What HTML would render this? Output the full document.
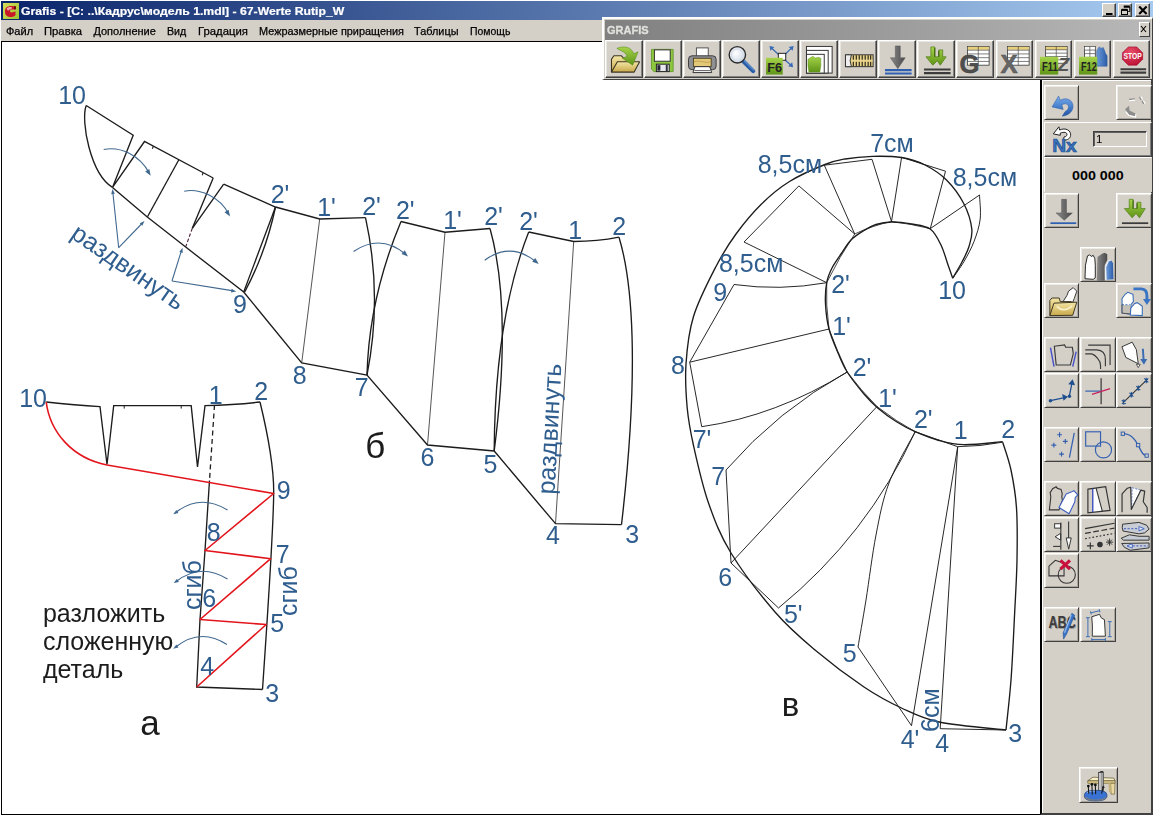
<!DOCTYPE html>
<html><head><meta charset="utf-8">
<style>
*{box-sizing:border-box;margin:0;padding:0}
html,body{width:1153px;height:816px;overflow:hidden;background:#d4d0c8;font-family:"Liberation Sans",sans-serif}
#root{position:absolute;left:0;top:0;width:1153px;height:816px;overflow:hidden;background:#fff}
#title{position:absolute;left:1px;top:1px;width:1152px;height:19px;background:linear-gradient(to right,#0a246a,#a6caf0)}
#title .t{position:absolute;left:19.6px;top:3.6px;font-size:11.5px;font-weight:bold;color:#fff;white-space:nowrap;transform-origin:0 0;line-height:13px;transform:scaleX(1.062);-webkit-text-stroke:0.2px #fff}
#menu{position:absolute;left:1px;top:20px;width:1152px;height:21px;background:#d4d0c8}
#menu span{position:absolute;top:4.6px;-webkit-text-stroke:0.25px #000;font-size:11px;line-height:13px;color:#000;white-space:nowrap;transform-origin:0 0}
.tb{position:absolute;top:2px;width:14.5px;height:13.6px;background:#d4d0c8;border:1px solid;border-color:#fff #404040 #404040 #fff;box-shadow:inset -1px -1px 0 #808080}
#canvas{position:absolute;left:1px;top:41px;width:1040px;height:774px;background:#fff;border:1px solid #000;border-right:none;}
#draw{position:absolute;left:0;top:0;width:1153px;height:816px;will-change:transform}
#tbwin{position:absolute;left:602px;top:17px;width:550.5px;height:63px;background:#d4d0c8;border:solid;border-width:2px 1.5px 1.5px 2px;border-color:#fff #404040 #404040 #fff}
#tbwin .cap{position:absolute;left:1px;top:1px;right:1px;height:19.5px;background:linear-gradient(to right,#808080,#a0a0a0 60%,#b8b8b8)}
#tbwin .cap b{position:absolute;left:2px;top:4px;font-size:10px;line-height:13px;color:#e0e0dc;transform-origin:0 0;transform:scaleX(1.1);-webkit-text-stroke:0.3px #e0e0dc;will-change:transform}
.xb{position:absolute;right:1px;top:2px;width:11px;height:15px;background:#d4d0c8;border:1px solid;border-color:#fff #404040 #404040 #fff}
.xb svg{position:absolute;left:-1px;top:-1px}
.btn{position:absolute;background:#d4d0c8;border:1px solid;border-color:#fff #404040 #404040 #fff;box-shadow:inset -1px -1px 0 #808080,inset 1px 1px 0 #e8e6e0}
.btn svg{position:absolute;left:0;top:0}
.sb{box-shadow:inset 1px 1px 0 #ecebe6,inset -1px -1px 0 #aaa69e;border-color:#fff #404040 #404040 #fff}
#side{position:absolute;left:1040px;top:79px;width:113px;height:735.5px;background:#d4d0c8;border-left:2px solid #000;border-top:1px solid #404040;border-right:2px solid #404040;border-bottom:2px solid #404040;box-shadow:inset 1px 1px 0 #fff}
.gl{position:absolute;left:0;top:0;width:100%;height:100%;will-change:transform}
.rp{position:absolute;background:#d4d0c8;border:1px solid;border-color:#fff #404040 #404040 #fff;box-shadow:inset -1px -1px 0 #808080}
</style></head><body><div id="root">
<div id="title"><div class="gl"><span class="t" id="ttxt">Grafis - [C: ..\Кадрус\модель 1.mdl] - 67-Werte Rutip_W</span></div>
<svg style="position:absolute;left:2px;top:1.5px" width="16" height="16" viewBox="0 0 16 16"><defs><linearGradient id="gic" x1="0" y1="0" x2="1" y2="1"><stop offset="0" stop-color="#d8dc58"/><stop offset="1" stop-color="#9cc234"/></linearGradient></defs><rect width="16" height="16" fill="url(#gic)"/><path d="M2,9 C1.5,4.5 5,2.5 9.5,3 L12.5,3.5 V6.5 L8.5,6.5 C6.5,6.5 6.5,9.5 8.5,9.5 L12.5,8.5 V12 C11,14.5 6,14.5 4,13 C2.5,12 2,10.5 2,9 Z" fill="#c81828"/><path d="M3.5,6 C4.5,4 7,3.8 9,4.2 L8.5,6.3 C6.5,6 5.5,7 5.5,8 Z" fill="#f0a8a8"/><path d="M11,3.3 h2 v3 h-2z" fill="#6a1010"/></svg>
<div class="tb" style="left:1100.5px"><svg width="14" height="13" viewBox="0 0 14 13" style="position:absolute;left:0;top:0"><rect x="3" y="9" width="6.5" height="2" fill="#000"/></svg></div>
<div class="tb" style="left:1116.5px"><svg width="14" height="13" viewBox="0 0 14 13" style="position:absolute;left:0;top:0"><path d="M4.8,3 h6 v4.5 h-1.5" fill="none" stroke="#000" stroke-width="1"/><path d="M4.8,2.5 h6" stroke="#000" stroke-width="2"/><rect x="2.5" y="6" width="6" height="4.5" fill="none" stroke="#000" stroke-width="1"/><path d="M2.5,5.8 h6" stroke="#000" stroke-width="2"/></svg></div>
<div class="tb" style="left:1134.4px"><svg width="14" height="13" viewBox="0 0 14 13" style="position:absolute;left:0;top:0"><path d="M3.2,2.6 L10.6,10 M10.6,2.6 L3.2,10" stroke="#000" stroke-width="2.1"/></svg></div>
</div>
<div id="menu"><div class="gl">
<span style="left:5.0px;transform:scaleX(1.000)">Файл</span><span style="left:42.8px;transform:scaleX(1.025)">Правка</span><span style="left:92.4px;transform:scaleX(1.000)">Дополнение</span><span style="left:165.6px;transform:scaleX(0.970)">Вид</span><span style="left:196.8px;transform:scaleX(1.030)">Градация</span><span style="left:257.8px;transform:scaleX(0.990)">Межразмерные приращения</span><span style="left:413.4px;transform:scaleX(0.990)">Таблицы</span><span style="left:469.0px;transform:scaleX(0.950)">Помощь</span>
</div></div>
<div id="canvas"></div>
<div id="side"></div>
<div class="btn sb" style="left:1044.0px;top:85.2px;width:35.2px;height:35.0px"><svg width="35.2" height="35.0" viewBox="0 0 36 36" font-family="Liberation Sans, sans-serif"><defs><linearGradient id="gund" x1="0" y1="0" x2="0" y2="1"><stop offset="0" stop-color="#7aaae6"/><stop offset="0.5" stop-color="#4a84d0"/><stop offset="1" stop-color="#2452a0"/></linearGradient></defs>
<path d="M7.1,21.5 L13.9,10.2 L15.6,14.6 C21,11.5 27.5,13.5 28.6,19.5 C29.5,25.5 24.5,30.5 17.6,31 L20.6,26.3 C23.5,24.8 24.6,22.5 23.8,20.3 C22.8,18 20,17.8 17.3,19.3 L18.6,24.2 Z" fill="url(#gund)" stroke="#2a5aa8" stroke-width="0.5" stroke-linejoin="round"/></svg></div>
<div class="btn sb" style="left:1116.4px;top:85.2px;width:35.2px;height:35.0px"><svg width="35.2" height="35.0" viewBox="0 0 36 36" font-family="Liberation Sans, sans-serif"><path d="M8.2,24 L12.3,20.2 L12.8,25.3 L18.9,28.4 L18.4,31 L12.3,29.6 Z" fill="#8c8c8c"/><path d="M9,26.5 L12.3,30.4 L18.8,31.9 L19.4,29.2" fill="none" stroke="#fff" stroke-width="1.2"/>
<path d="M12.3,13.8 L18.4,13.2" stroke="#8c8c8c" stroke-width="1.4"/><path d="M12.5,15.2 L18.6,14.6" stroke="#fff" stroke-width="1.2"/>
<path d="M23,11.3 L28.1,19.4" stroke="#8c8c8c" stroke-width="1.4" stroke-dasharray="3.5,1.5"/><path d="M24.4,10.9 L29.5,19" stroke="#fff" stroke-width="1.2" stroke-dasharray="3.5,1.5"/></svg></div>
<div class="rp" style="left:1044px;top:121.6px;width:107.6px;height:35px"></div>
<svg style="position:absolute;left:1050px;top:124px" width="30" height="30" viewBox="0 0 30 30" font-family="Liberation Sans, sans-serif">
<path d="M3.3,9.9 L8.9,2.8 L9.6,6 C15.5,3.2 21.3,6.5 20.6,11.5 C20.2,14.5 17.5,16.3 13.4,16.2 L14,13 C16.8,12.6 17.6,10.8 16.6,9.3 C15.5,7.8 12.8,8.2 10.2,9.2 L10.3,11.3 Z" fill="#fff" stroke="#222" stroke-width="1" stroke-linejoin="round"/>
<text x="2.2" y="27.6" font-size="18.5" font-weight="bold" fill="#3a74c0" stroke="#1f4f8f" stroke-width="0.7" textLength="24.5" lengthAdjust="spacingAndGlyphs">Nx</text></svg>
<div style="position:absolute;left:1092.8px;top:130.5px;width:54px;height:16.7px;border:1px solid;border-color:#404040 #fff #fff #404040;box-shadow:inset 1px 1px 0 #606060;background:#d4d0c8"><span style="position:absolute;left:2.4px;top:1.6px;font-size:11.5px;line-height:13px;color:#000;will-change:transform">1</span></div>
<div class="rp" style="left:1044px;top:157.4px;width:107.6px;height:34.4px;border-color:#fff #d4d0c8 #d4d0c8 #fff;box-shadow:none"><span id="zz" style="position:absolute;left:26.6px;top:9.5px;font-size:13px;line-height:15px;font-weight:bold;color:#000;white-space:nowrap;transform-origin:0 0;transform:scaleX(1.1)">000 000</span></div>
<div class="btn sb" style="left:1044.0px;top:193.0px;width:35.2px;height:35.0px"><svg width="35.2" height="35.0" viewBox="0 0 36 36" font-family="Liberation Sans, sans-serif"><path d="M17,5.5 H22 V19.5 H28 L19.7,27 L11.3,19.5 H17 Z" fill="url(#ggry)" stroke="#555" stroke-width="0.5"/><path d="M5.5,30 H32" stroke="#2f5fb0" stroke-width="1.8"/></svg></div>
<div class="btn sb" style="left:1116.4px;top:193.0px;width:35.2px;height:35.0px"><svg width="35.2" height="35.0" viewBox="0 0 36 36" font-family="Liberation Sans, sans-serif"><path d="M12.5,5.5 H16.5 V15 H20.5 V8.5 H24.5 V15 H29 L23,24.5 L19.5,20 L15.5,24.5 L7.5,15 H12.5 Z" fill="url(#ggrn)" stroke="#4d7a10" stroke-width="0.7"/>
<path d="M16.5,6.5 v8.5 M20.5,9.5 v5.5" stroke="#35580a" stroke-width="1"/><path d="M5,30 H32" stroke="#3c3c3c" stroke-width="1.8"/></svg></div>
<div class="btn sb" style="left:1080.4px;top:246.6px;width:35.2px;height:35.0px"><svg width="35.2" height="35.0" viewBox="0 0 36 36" font-family="Liberation Sans, sans-serif"><path d="M4,31.6 L4.5,17.7 L6.6,8.1 L8.8,7 L10.4,8.7 L12.5,7.6 L14.1,10.8 L14.6,17.7 V30.6 L12.5,32.2 Z" fill="#fff" stroke="#222" stroke-width="1"/>
<path d="M16.2,34 L16.8,9.2 L21.6,6 L24.3,4.9 L26.9,6.5 V12.4 L24.3,17.7 V33.8 Z" fill="url(#ggry)"/>
<path d="M25.4,32.7 L25.2,20 Q26.5,14 30.5,12.6" fill="none" stroke="#e8eef8" stroke-width="1.6"/>
<path d="M26.4,32.7 L25.9,19.9 L28.5,14 L31.2,12.9 L32.8,15.6 L33.3,32.2 Z" fill="url(#gblu)"/></svg></div>
<div class="btn sb" style="left:1044.0px;top:283.3px;width:35.2px;height:35.0px"><svg width="35.2" height="35.0" viewBox="0 0 36 36" font-family="Liberation Sans, sans-serif"><path d="M18.2,18.5 L22.5,11.7 L24.1,7.4 L28.9,3.7 L32.6,7.4 L30,14.9 L28.4,18.7 Z" fill="#fff" stroke="#333" stroke-width="1"/>
<path d="M4.9,32.5 V17 L7,14.4 H14.5 L15.6,18.1 H27 V19.5" fill="url(#gfold)" stroke="#3a3420" stroke-width="1"/>
<path d="M4.9,32.5 L9.1,19.7 L32.6,18.7 L28.4,32.2 Z" fill="url(#gfold)" stroke="#3a3420" stroke-width="1" stroke-linejoin="round"/>
<path d="M12,23 Q19,30 28,22.5" fill="none" stroke="#f8f0c8" stroke-width="1.8"/></svg></div>
<div class="btn sb" style="left:1116.4px;top:283.3px;width:35.2px;height:35.0px"><svg width="35.2" height="35.0" viewBox="0 0 36 36" font-family="Liberation Sans, sans-serif"><path d="M5.1,29.9 V14.9 L8.3,10.6 L11,8.5 L13.6,9.6 L16.3,10.6 L16.8,18.1 L14.2,21.3 L13.6,30.9 Z" fill="#fff" stroke="#3a6cb4" stroke-width="1.1"/>
<path d="M5.6,21.5 H14 L13.6,30.4 L5.6,29.5 Z" fill="#c4c0b8"/><path d="M5.1,21.3 H13" stroke="#3a6cb4" stroke-width="1" stroke-dasharray="2,1.5"/><path d="M5.1,21 V29.9 L13.6,30.9" fill="none" stroke="#555" stroke-width="1"/>
<path d="M13.6,32 L14.2,24.5 L17.9,20.3 L20.6,19.2 L23.2,20.8 L25.9,22.9 V32.5 Z" fill="#fff" stroke="#3a6cb4" stroke-width="1.1"/>
<path d="M16.8,5 H25 Q30.7,5.5 30.7,12 V16" fill="none" stroke="#3a74c4" stroke-width="3"/><path d="M26.6,15.5 H34.8 L30.7,21.6 Z" fill="#3a74c4"/></svg></div>
<div class="btn sb" style="left:1044.0px;top:337.2px;width:35.2px;height:35.0px"><svg width="35.2" height="35.0" viewBox="0 0 36 36" font-family="Liberation Sans, sans-serif"><path d="M9.5,8.5 L20,7.2 L21.2,9.5 H28 L29,16 L26,27.8 H11.4 Z" fill="none" stroke="#3a3a3a" stroke-width="1.2"/><path d="M5.5,9.8 L9.2,29.5 M32,14 L28.4,29.5" stroke="#4a52c8" stroke-width="1.5"/></svg></div>
<div class="btn sb" style="left:1080.4px;top:337.2px;width:35.2px;height:35.0px"><svg width="35.2" height="35.0" viewBox="0 0 36 36" font-family="Liberation Sans, sans-serif"><path d="M7.3,7.3 H29.8 V27.8" fill="none" stroke="#3a3a3a" stroke-width="1.2"/><path d="M4.3,12.2 H16 Q25,12.5 25,22 V29" fill="none" stroke="#3a3a3a" stroke-width="1.2"/><path d="M4.3,16.3 H11 Q14,17 17,21 Q20,24.5 20,28 V32" fill="none" stroke="#3a3a3a" stroke-width="1.2"/></svg></div>
<div class="btn sb" style="left:1116.4px;top:337.2px;width:35.2px;height:35.0px"><svg width="35.2" height="35.0" viewBox="0 0 36 36" font-family="Liberation Sans, sans-serif"><path d="M5,9 L15.5,4.3 L19.8,12 L21.8,26.5 L9,20 Z" fill="#fff" stroke="#333" stroke-width="1"/><path d="M26.5,11 L27.3,23" stroke="#3a6cb4" stroke-width="2"/><path d="M23.8,21.5 H31 L27.6,27.5 Z" fill="#3a6cb4"/><path d="M19.8,27 h4 l-2,3.5z" fill="#fff" stroke="#333" stroke-width="0.8"/></svg></div>
<div class="btn sb" style="left:1044.0px;top:373.0px;width:35.2px;height:35.0px"><svg width="35.2" height="35.0" viewBox="0 0 36 36" font-family="Liberation Sans, sans-serif"><path d="M5.5,27.5 L20,24.2 M25,22.5 L27.5,10" stroke="#1f4f8f" stroke-width="1.3"/><circle cx="5.5" cy="27.5" r="1.8" fill="#1f4f8f"/><circle cx="25" cy="23" r="1.8" fill="#1f4f8f"/><path d="M23.5,23.5 L17.5,20.5 L19,27.5 Z M28.3,5.5 L23.8,10.5 L30.8,11.5 Z" fill="#1f4f8f"/></svg></div>
<div class="btn sb" style="left:1080.4px;top:373.0px;width:35.2px;height:35.0px"><svg width="35.2" height="35.0" viewBox="0 0 36 36" font-family="Liberation Sans, sans-serif"><path d="M20.6,4.3 V31" stroke="#333" stroke-width="1.2"/><path d="M4.3,17.6 H21" stroke="#3560b0" stroke-width="1.2"/><path d="M11.2,21 L29.8,15" stroke="#c8205c" stroke-width="1.2"/></svg></div>
<div class="btn sb" style="left:1116.4px;top:373.0px;width:35.2px;height:35.0px"><svg width="35.2" height="35.0" viewBox="0 0 36 36" font-family="Liberation Sans, sans-serif"><path d="M5.9,29.8 L31.4,5.3" stroke="#333" stroke-width="1.1"/><path d="M4.9,26.8 l4,4 m-4,0 l4,-4 m-2,-0.8 v5.6" stroke="#1f4f8f" stroke-width="1.1"/><path d="M12.7,19.3 l4,4 m-4,0 l4,-4 m-2,-0.8 v5.6" stroke="#1f4f8f" stroke-width="1.1"/><path d="M19.8,12.5 l4,4 m-4,0 l4,-4 m-2,-0.8 v5.6" stroke="#1f4f8f" stroke-width="1.1"/><path d="M28.0,4.6 l4,4 m-4,0 l4,-4 m-2,-0.8 v5.6" stroke="#1f4f8f" stroke-width="1.1"/></svg></div>
<div class="btn sb" style="left:1044.0px;top:427.3px;width:35.2px;height:35.0px"><svg width="35.2" height="35.0" viewBox="0 0 36 36" font-family="Liberation Sans, sans-serif"><path d="M12.4,6.9 h5 m-2.5,-2.5 v5" stroke="#3560b0" stroke-width="1.2"/><path d="M18.3,13.7 h5 m-2.5,-2.5 v5" stroke="#3560b0" stroke-width="1.2"/><path d="M6.5,17.6 h5 m-2.5,-2.5 v5" stroke="#3560b0" stroke-width="1.2"/><path d="M14.4,26.9 h5 m-2.5,-2.5 v5" stroke="#3560b0" stroke-width="1.2"/><path d="M30,4.9 L25,30.4" stroke="#3560b0" stroke-width="1.3"/></svg></div>
<div class="btn sb" style="left:1080.4px;top:427.3px;width:35.2px;height:35.0px"><svg width="35.2" height="35.0" viewBox="0 0 36 36" font-family="Liberation Sans, sans-serif"><rect x="4.7" y="3.9" width="15.3" height="14.7" fill="none" stroke="#3560b0" stroke-width="1.2"/><circle cx="23" cy="22.5" r="8.3" fill="none" stroke="#3560b0" stroke-width="1.2"/></svg></div>
<div class="btn sb" style="left:1116.4px;top:427.3px;width:35.2px;height:35.0px"><svg width="35.2" height="35.0" viewBox="0 0 36 36" font-family="Liberation Sans, sans-serif"><path d="M5.9,5.9 C14,6 18,11 21.6,17.6 C25,24 26,28 30.4,28.4" fill="none" stroke="#3560b0" stroke-width="1.3"/><rect x="4.2" y="4.2" width="3.4" height="3.4" fill="#d4d0c8" stroke="#3560b0" stroke-width="1"/><rect x="19.9" y="15.9" width="3.4" height="3.4" fill="#d4d0c8" stroke="#3560b0" stroke-width="1"/><rect x="28.7" y="26.7" width="3.4" height="3.4" fill="#d4d0c8" stroke="#3560b0" stroke-width="1"/></svg></div>
<div class="btn sb" style="left:1044.0px;top:481.4px;width:35.2px;height:35.0px"><svg width="35.2" height="35.0" viewBox="0 0 36 36" font-family="Liberation Sans, sans-serif"><path d="M4.4,28.7 L5.9,15.3 L5.2,11 L7.8,6.9 L11.3,4.9 Q12.5,7.5 16.3,7.4 L17.6,12 L17.2,15.3 L17.8,19 L16.8,21.3 L14.3,28.7 Z" fill="#d4d0c8" stroke="#333" stroke-width="1.1"/>
<path d="M14.3,26.2 L21.7,12.3 L26.7,10.4 L29.6,8.9 L33.6,13.3 L31,16 L30.6,20.3 L24.7,32.6 Z" fill="#fff" stroke="#3a5cc0" stroke-width="1.1" stroke-linejoin="round"/></svg></div>
<div class="btn sb" style="left:1080.4px;top:481.4px;width:35.2px;height:35.0px"><svg width="35.2" height="35.0" viewBox="0 0 36 36" font-family="Liberation Sans, sans-serif"><path d="M12.5,7.2 L15.4,6.6 L21.6,30.2 L12.5,31.2 Z" fill="#fff"/><path d="M7,7.4 L25.3,4.9 L29.8,29.2 L7,31.7 Z" fill="none" stroke="#333" stroke-width="1.2"/><path d="M12,7 V31.2" stroke="#3048c0" stroke-width="1.3"/><path d="M15.4,6.4 L21.9,30.2" stroke="#333" stroke-width="1.1"/></svg></div>
<div class="btn sb" style="left:1116.4px;top:481.4px;width:35.2px;height:35.0px"><svg width="35.2" height="35.0" viewBox="0 0 36 36" font-family="Liberation Sans, sans-serif"><path d="M15.5,5.9 L24.4,8.4 L15,27.2 Z" fill="#fff" stroke="#5a7ad0" stroke-width="0.9" stroke-dasharray="2,1.4"/><path d="M5.1,31.2 V12.3 L10.6,6.4 L14,5.4 L14.6,28.2 L24.4,8.4 L28.4,9.4 L26.9,20.3 L30.9,26.2 V31.7" fill="none" stroke="#333" stroke-width="1.2" stroke-linejoin="round"/></svg></div>
<div class="btn sb" style="left:1044.0px;top:517.0px;width:35.2px;height:35.0px"><svg width="35.2" height="35.0" viewBox="0 0 36 36" font-family="Liberation Sans, sans-serif"><rect x="9.8" y="5.9" width="6.2" height="4.5" fill="#fff" stroke="#333" stroke-width="1"/><path d="M16,15.8 V22.8 L10.3,19.3 Z" fill="#fff" stroke="#333" stroke-width="1"/><path d="M8.3,29.2 H16" stroke="#333" stroke-width="1.1"/><path d="M16.2,4.5 V32.7 M24.2,3.5 V22" stroke="#333" stroke-width="1.1"/><path d="M21.7,20.5 H26.9 L24.3,32 Z" fill="#fff" stroke="#333" stroke-width="1"/></svg></div>
<div class="btn sb" style="left:1080.4px;top:517.0px;width:35.2px;height:35.0px"><svg width="35.2" height="35.0" viewBox="0 0 36 36" font-family="Liberation Sans, sans-serif"><path d="M4.1,10.9 L34.3,5.4" stroke="#333" stroke-width="1.2"/><path d="M4.1,15.8 L34.3,10.4" stroke="#333" stroke-width="1.2" stroke-dasharray="6,2.5"/><path d="M4.1,21.3 L34.3,15.8" stroke="#333" stroke-width="1.2" stroke-dasharray="1.8,2"/>
<path d="M6,28.7 h7 m-3.5,-3.5 v7" stroke="#333" stroke-width="1.2"/><circle cx="19.4" cy="27.2" r="2.9" fill="#333"/><path d="M25.6,24.8 h7.4 m-3.7,-3.7 v7.4 m-2.6,-6.3 l5.2,5.2 m0,-5.2 l-5.2,5.2" stroke="#333" stroke-width="1"/></svg></div>
<div class="btn sb" style="left:1116.4px;top:517.0px;width:35.2px;height:35.0px"><svg width="35.2" height="35.0" viewBox="0 0 36 36" font-family="Liberation Sans, sans-serif"><path d="M5.6,6.4 L22.5,4.5 L30.4,7.4 L32.9,11.4 L28.4,15.3 L22.5,16.3 L6.1,13.4 Q4.8,10 5.6,6.4 Z" fill="#c8ccd4" stroke="#333" stroke-width="1"/><path d="M7,11 H22" stroke="#3a5cc0" stroke-width="1" stroke-dasharray="2.2,1.6"/><path d="M22.5,8.8 l5.4,2.2 -5.4,2.2z" fill="#e8ecf4" stroke="#3a5cc0" stroke-width="0.9"/>
<path d="M4.2,20.8 L12.6,17.3 L22.5,18.8 H32.9 V22.8 H6.6 Z" fill="#c8ccd4" stroke="#333" stroke-width="1"/>
<path d="M4.7,26.2 L32.9,25.7 V30.7 L13.6,33.2 L7.6,30.2 Z" fill="#c8ccd4" stroke="#333" stroke-width="1"/><path d="M16,28.7 H32" stroke="#3a5cc0" stroke-width="1" stroke-dasharray="2.2,1.6"/><path d="M15.6,26.5 l-5.4,2.2 5.4,2.2z" fill="#e8ecf4" stroke="#3a5cc0" stroke-width="0.9"/></svg></div>
<div class="btn sb" style="left:1044.0px;top:553.2px;width:35.2px;height:35.0px"><svg width="35.2" height="35.0" viewBox="0 0 36 36" font-family="Liberation Sans, sans-serif"><path d="M4,22.5 V12.5 L10.5,6.5 L19.5,9.5 V22.5 Z" fill="none" stroke="#333" stroke-width="1.1"/><circle cx="22.3" cy="21.3" r="8.8" fill="none" stroke="#333" stroke-width="1.1"/><path d="M15.8,6.5 L25.6,15.5 M25.6,6.5 L15.8,15.5" stroke="#c8103c" stroke-width="3.3"/></svg></div>
<div class="btn sb" style="left:1044.0px;top:607.2px;width:35.2px;height:35.0px"><svg width="35.2" height="35.0" viewBox="0 0 36 36" font-family="Liberation Sans, sans-serif"><text x="4.5" y="22" font-size="17" font-weight="bold" fill="#999" textLength="28" lengthAdjust="spacingAndGlyphs">ABC</text><text x="3.5" y="21" font-size="17" font-weight="bold" fill="#3c3c3c" textLength="28" lengthAdjust="spacingAndGlyphs">ABC</text>
<path d="M27.5,5.5 L30.5,7.5 L22,27 L19,32 L18.5,25.5 Z" fill="#3a74c8" stroke="#1f4f8f" stroke-width="0.6"/><path d="M27,7 L20,25.5" stroke="#9cc0f0" stroke-width="1.2"/></svg></div>
<div class="btn sb" style="left:1080.4px;top:607.2px;width:35.2px;height:35.0px"><svg width="35.2" height="35.0" viewBox="0 0 36 36" font-family="Liberation Sans, sans-serif"><path d="M11,9 L19,6.5 Q20,11 24,12 L25,29 H11.5 Q12,18 11,9 Z" fill="#fff" stroke="#333" stroke-width="1"/>
<path d="M7,10 V29.5 M5,10 h4 M5,29.5 h4 M29.5,14 V29.5 M27.5,14 h4 M27.5,29.5 h4 M11,32.5 H25 M11,30.8 v3.4 M25,30.8 v3.4 M10,5 L19,2.8 M9.6,3.4 l0.8,3.2 M18.6,1.2 l0.8,3.2" stroke="#3a6cb4" stroke-width="1" fill="none"/></svg></div>
<div class="btn sb" style="left:1078.5px;top:767.0px;width:39.2px;height:35.5px"><svg width="39.2" height="35.5" viewBox="0 0 36 36" font-family="Liberation Sans, sans-serif"><path d="M6,13 L11.3,9.3 L32.4,10.3 L33.8,13 Z" fill="#f6efc8" stroke="#5a4e28" stroke-width="0.7"/>
<path d="M6,13 H33.8 V15.5 H6 Z" fill="#e0cc88" stroke="#5a4e28" stroke-width="0.6"/>
<path d="M29.2,15.5 H33.6 L33.2,26.5 H29.6 Z" fill="#ead9a0" stroke="#5a4e28" stroke-width="0.6"/>
<path d="M27,15.5 h2.2 l0.3,9 h-2z" fill="#c8b478"/>
<rect x="16.8" y="4.5" width="5" height="19" fill="#c4c4c4" stroke="#444" stroke-width="0.8"/><path d="M16.8,4.5 l2.5,-1.5 h2.5 v1.5z" fill="#333"/><path d="M20.3,5 v18" stroke="#888" stroke-width="1.2"/>
<path d="M2.6,27 Q3,22.6 14,22.6 Q25.2,22.6 25.4,27 V29.5 Q24,33.4 14,33.4 Q3.5,33.4 2.6,29.5 Z" fill="#3a72d4" stroke="#1a3a78" stroke-width="0.7"/>
<path d="M2.8,29 Q8,32 14,32 Q21,32 25.2,29 V29.8 Q23,33.2 14,33.2 Q4.5,33.2 2.8,29.8 Z" fill="#707a88"/>
<path d="M5,25 Q9,23.2 14,23.3" fill="none" stroke="#8ab4f0" stroke-width="1"/>
<path d="M7,26 L6.6,19 M10.6,27 L10.2,17.3 M14,26.5 L13.7,18 M20,26 L21.5,20" stroke="#1a1a1a" stroke-width="1.1"/><circle cx="6.6" cy="18.3" r="1.4" fill="#111"/><circle cx="10.2" cy="16.5" r="1.4" fill="#111"/><circle cx="13.7" cy="17.2" r="1.4" fill="#111"/><circle cx="21.7" cy="19.5" r="1.2" fill="#222"/></svg></div>

<svg id="draw" width="1153" height="816" viewBox="0 0 1153 816" font-family="Liberation Sans, sans-serif">
<path d="M86.2,105.5 C80.5,121 90.5,174 112.5,187.4" fill="none" stroke="#1c1c1c" stroke-width="1.35" />
<path d="M86.2,105.5 L133.2,135.2 L112.5,187.4 L144.5,141.5 L213.2,178.0" fill="none" stroke="#1c1c1c" stroke-width="1.35" />
<path d="M178.7,160.0 L147.5,216.8" fill="none" stroke="#1c1c1c" stroke-width="1.35" />
<path d="M213.2,178.0 L192.3,228.3" fill="none" stroke="#1c1c1c" stroke-width="1.35" />
<path d="M223.7,184.2 L192.3,228.3" fill="none" stroke="#1c1c1c" stroke-width="1.35" />
<path d="M192.3,228.3 L185.8,246.5" fill="none" stroke="#4a2038" stroke-width="1.1" stroke-dasharray="3.5,2"/>
<path d="M223.7,184.2 L275.5,207.0 L319.7,219.0 L365.5,217.7" fill="none" stroke="#1c1c1c" stroke-width="1.35" />
<path d="M112.5,187.4 L147.3,217.0 L186.0,247.3 L243.7,292.0 L301.7,363.0 L367.0,375.0 L427.5,445.0 L494.2,451.0 L555.5,523.7 L621.5,524.7" fill="none" stroke="#1c1c1c" stroke-width="1.35" />
<path d="M243.7,292.0 L275.5,207.0" fill="none" stroke="#1c1c1c" stroke-width="1.35" />
<path d="M244.7,292.0 Q266.0,252.0 275.5,207.0" fill="none" stroke="#1c1c1c" stroke-width="1.35" />
<path d="M365.5,217.7 Q382.7,295.8 367.0,375.0" fill="none" stroke="#1c1c1c" stroke-width="1.35" />
<path d="M401.0,221.5 Q369,298 367.0,375.0" fill="none" stroke="#1c1c1c" stroke-width="1.35" />
<path d="M401.0,221.5 L445.0,232.2 L490.0,228.5" fill="none" stroke="#1c1c1c" stroke-width="1.35" />
<path d="M490.0,228.5 C501,268 509,335 494.2,451.0" fill="none" stroke="#1c1c1c" stroke-width="1.35" />
<path d="M528.7,232.0 Q495,318 494.2,451.0" fill="none" stroke="#1c1c1c" stroke-width="1.35" />
<path d="M528.7,232.0 L573.7,241.5 Q597,241.5 619.0,237.2" fill="none" stroke="#1c1c1c" stroke-width="1.35" />
<path d="M619.0,237.2 C632,280 640,365 621.5,524.7" fill="none" stroke="#1c1c1c" stroke-width="1.35" />
<path d="M319.7,219.0 L301.7,363.0" fill="none" stroke="#1c1c1c" stroke-width="0.75" />
<path d="M445.0,232.2 L427.5,445.0" fill="none" stroke="#1c1c1c" stroke-width="0.75" />
<path d="M573.7,241.5 L555.5,523.7" fill="none" stroke="#1c1c1c" stroke-width="0.75" />
<path d="M153.3,146.3 l-0.9,2.4" fill="none" stroke="#1c1c1c" stroke-width="1.1" />
<path d="M203.1,172.9 l-0.9,2.4" fill="none" stroke="#1c1c1c" stroke-width="1.1" />
<path d="M103.7,149.5 C120,146 140,155 149.5,173.5" fill="none" stroke="#41688f" stroke-width="1.1" />
<path d="M0,0 L-6.5,-2.4 L-6.5,2.4 Z" fill="#41688f" transform="translate(150.7,175.7) rotate(58.0)"/>
<path d="M184.2,191.2 C200,188 220,197 229,214.5" fill="none" stroke="#41688f" stroke-width="1.1" />
<path d="M0,0 L-6.5,-2.4 L-6.5,2.4 Z" fill="#41688f" transform="translate(230.0,216.5) rotate(58.0)"/>
<path d="M353.5,251.5 Q381,233 406.5,255" fill="none" stroke="#41688f" stroke-width="1.1" />
<path d="M0,0 L-6.5,-2.4 L-6.5,2.4 Z" fill="#41688f" transform="translate(408.0,256.5) rotate(42.0)"/>
<path d="M484.7,260.2 Q511,241 537,262.5" fill="none" stroke="#41688f" stroke-width="1.1" />
<path d="M0,0 L-6.5,-2.4 L-6.5,2.4 Z" fill="#41688f" transform="translate(538.7,264.0) rotate(40.0)"/>
<path d="M118.7,247.7 L113,194" fill="none" stroke="#41688f" stroke-width="1.1" />
<path d="M0,0 L-5.0,-1.8 L-5.0,1.8 Z" fill="#41688f" transform="translate(112.5,189.0) rotate(-96.0)"/>
<path d="M118.7,247.7 L141.5,224" fill="none" stroke="#41688f" stroke-width="1.1" />
<path d="M0,0 L-5.0,-1.8 L-5.0,1.8 Z" fill="#41688f" transform="translate(144.5,221.0) rotate(-46.0)"/>
<path d="M172,281 L181,252" fill="none" stroke="#41688f" stroke-width="1.1" />
<path d="M0,0 L-5.0,-1.8 L-5.0,1.8 Z" fill="#41688f" transform="translate(182.5,247.7) rotate(-73.0)"/>
<path d="M172,281 L232,290.6" fill="none" stroke="#41688f" stroke-width="1.1" />
<path d="M0,0 L-5.0,-1.8 L-5.0,1.8 Z" fill="#41688f" transform="translate(236.2,291.5) rotate(10.0)"/>
<text x="58.2" y="103.7" font-size="25" fill="#2e5d8e">10</text>
<text x="270.7" y="203.0" font-size="25" fill="#2e5d8e">2'</text>
<text x="317.2" y="215.5" font-size="25" fill="#2e5d8e">1'</text>
<text x="362.2" y="215.0" font-size="25" fill="#2e5d8e">2'</text>
<text x="395.9" y="218.5" font-size="25" fill="#2e5d8e">2'</text>
<text x="443.2" y="228.5" font-size="25" fill="#2e5d8e">1'</text>
<text x="484.2" y="225.0" font-size="25" fill="#2e5d8e">2'</text>
<text x="519.2" y="229.7" font-size="25" fill="#2e5d8e">2'</text>
<text x="568.2" y="239.0" font-size="25" fill="#2e5d8e">1</text>
<text x="612.2" y="234.7" font-size="25" fill="#2e5d8e">2</text>
<text x="232.9" y="312.7" font-size="25" fill="#2e5d8e">9</text>
<text x="292.7" y="383.5" font-size="25" fill="#2e5d8e">8</text>
<text x="354.7" y="396.0" font-size="25" fill="#2e5d8e">7</text>
<text x="420.4" y="466.0" font-size="25" fill="#2e5d8e">6</text>
<text x="483.4" y="472.5" font-size="25" fill="#2e5d8e">5</text>
<text x="545.9" y="543.7" font-size="25" fill="#2e5d8e">4</text>
<text x="625.2" y="543.0" font-size="25" fill="#2e5d8e">3</text>
<text transform="translate(554.6,494.8) rotate(-87)" font-size="25" fill="#2e5d8e">раздвинуть</text>
<text transform="translate(69.5,237.0) rotate(34.5)" font-size="25" fill="#2e5d8e">раздвинуть</text>
<text x="365.2" y="458.0" font-size="35" fill="#1c1c1c">б</text>
<path d="M46.2,402 Q75,405 100,406.6 L107,464.5 L113.7,405.6 L191.2,405.6 L197.5,467 L205,405.6 Q235,405 260,402" fill="none" stroke="#1c1c1c" stroke-width="1.35" />
<path d="M124.2,405.6 l0,3 M181.2,405.6 l0,3" fill="none" stroke="#1c1c1c" stroke-width="1" />
<path d="M260,402 C268,435 274,470 273.7,493.5 S268,610 262.5,689.5" fill="none" stroke="#1c1c1c" stroke-width="1.35" />
<path d="M214.5,405 L209.5,480.5" fill="none" stroke="#1c1c1c" stroke-width="1.3" stroke-dasharray="5,3.5"/>
<path d="M209.5,480.5 L205.0,550.5 L200.0,619.5 L196.7,687.0 L262.5,689.5" fill="none" stroke="#1c1c1c" stroke-width="1.35" />
<path d="M46.2,402 C50,432 72,458 107,465 L273.7,493.5 L205,550.5 L270.7,558.7 L200,619.5 L266.2,624.5 L196.7,687" fill="none" stroke="#e3151c" stroke-width="1.6" stroke-linejoin="round"/>
<path d="M227.5,510 Q200,493 175,513" fill="none" stroke="#41688f" stroke-width="1.1" />
<path d="M0,0 L-5.0,-1.8 L-5.0,1.8 Z" fill="#41688f" transform="translate(173.2,514.2) rotate(148.0)"/>
<path d="M227.5,579 Q200,562 175.5,582" fill="none" stroke="#41688f" stroke-width="1.1" />
<path d="M0,0 L-5.0,-1.8 L-5.0,1.8 Z" fill="#41688f" transform="translate(173.7,583.0) rotate(148.0)"/>
<path d="M227,644.5 Q200,627 175,647.5" fill="none" stroke="#41688f" stroke-width="1.1" />
<path d="M0,0 L-5.0,-1.8 L-5.0,1.8 Z" fill="#41688f" transform="translate(173.2,648.7) rotate(148.0)"/>
<text x="19.2" y="406.5" font-size="25" fill="#2e5d8e">10</text>
<text x="208.7" y="404.0" font-size="25" fill="#2e5d8e">1</text>
<text x="254.2" y="400.0" font-size="25" fill="#2e5d8e">2</text>
<text x="276.7" y="499.0" font-size="25" fill="#2e5d8e">9</text>
<text x="206.7" y="540.5" font-size="25" fill="#2e5d8e">8</text>
<text x="275.7" y="562.5" font-size="25" fill="#2e5d8e">7</text>
<text x="202.2" y="606.7" font-size="25" fill="#2e5d8e">6</text>
<text x="270.2" y="631.5" font-size="25" fill="#2e5d8e">5</text>
<text x="200.2" y="674.5" font-size="25" fill="#2e5d8e">4</text>
<text x="265.2" y="701.5" font-size="25" fill="#2e5d8e">3</text>
<text transform="translate(200.8,610.0) rotate(-90)" font-size="25" fill="#2e5d8e">сгиб</text>
<text transform="translate(297.0,616.0) rotate(-90)" font-size="25" fill="#2e5d8e">сгиб</text>
<text x="42.9" y="621.5" font-size="25" fill="#1c1c1c">разложить</text>
<text x="42.9" y="649.5" font-size="25" fill="#1c1c1c">сложенную</text>
<text x="42.9" y="677.5" font-size="25" fill="#1c1c1c">деталь</text>
<text x="140.2" y="735.0" font-size="35" fill="#1c1c1c">а</text>
<path d="M952.7,278.2 C954.2,275.5 959.3,267.3 962.0,262.0 C964.7,256.7 967.4,252.0 969.0,246.5 C970.6,241.0 972.6,236.1 971.8,229.0 C971.0,221.9 968.2,212.2 964.0,204.0 C959.8,195.8 953.0,186.5 946.5,180.0 C940.0,173.5 932.5,168.8 925.0,165.0 C917.5,161.2 910.2,158.9 901.5,157.5 C892.8,156.1 881.9,156.1 872.5,156.3 C863.1,156.6 852.9,157.6 845.0,159.0 C837.1,160.4 834.2,160.8 825.0,164.5 C815.8,168.2 800.1,174.9 789.5,181.5 C778.9,188.1 770.4,195.2 761.5,204.0 C752.6,212.8 743.6,223.6 736.0,234.0 C728.4,244.4 723.1,252.8 716.0,266.5 C708.9,280.2 698.5,300.2 693.5,316.5 C688.5,332.8 687.0,348.8 686.0,364.0 C685.0,379.2 686.0,394.4 687.2,408.0 C688.5,421.6 690.0,429.7 693.5,445.5 C697.0,461.3 702.2,485.1 708.5,503.0 C714.8,520.9 719.9,534.8 731.0,553.0 C742.1,571.2 761.0,595.8 775.0,612.0 C789.0,628.2 800.2,637.5 815.0,650.0 C829.8,662.5 849.6,677.3 864.0,687.0 C878.4,696.7 889.0,702.2 901.5,708.0 C914.0,713.8 921.6,718.3 939.0,722.0 C956.4,725.7 994.8,728.7 1006.0,730.0" fill="none" stroke="#1c1c1c" stroke-width="1.35" />
<path d="M952.7,278.2 C952.0,276.1 950.4,271.4 948.4,265.9 C946.4,260.4 944.0,251.2 941.0,245.0 C938.0,238.8 935.1,232.5 930.2,229.0 C925.3,225.5 918.0,225.2 911.5,224.0 C905.0,222.8 897.4,221.9 891.5,222.0 C885.6,222.1 880.6,223.1 876.0,224.5 C871.4,225.9 868.2,227.9 864.0,230.5 C859.8,233.1 854.8,236.1 851.0,240.0 C847.2,243.9 844.2,249.3 841.0,254.0 C837.8,258.7 834.4,263.2 832.0,268.0 C829.6,272.8 827.8,276.7 826.7,282.7 C825.6,288.7 825.1,296.3 825.5,304.0 C825.9,311.7 826.8,320.7 829.0,329.0 C831.2,337.3 835.5,346.8 838.5,354.0 C841.5,361.2 843.0,365.3 847.2,372.0 C851.5,378.7 858.9,388.0 864.0,394.0 C869.1,400.0 872.3,403.4 877.7,408.0 C883.1,412.6 890.2,417.8 896.5,421.7 C902.8,425.6 908.1,428.6 915.2,431.7 C922.3,434.8 930.9,438.3 939.0,440.5 C947.1,442.7 953.4,444.5 964.0,444.7 C974.6,444.9 996.2,442.2 1002.7,441.7" fill="none" stroke="#1c1c1c" stroke-width="1.35" />
<path d="M930.3,228.6 L979.5,195.0" fill="none" stroke="#1c1c1c" stroke-width="0.95" />
<path d="M979.5,195.0 C979.6,199.0 981.1,211.2 980.2,219.0 C979.3,226.8 976.7,234.4 974.0,241.5 C971.3,248.6 967.5,255.4 964.0,261.5 C960.5,267.6 954.6,275.4 952.7,278.2" fill="none" stroke="#1c1c1c" stroke-width="0.95" />
<path d="M930.3,228.6 L945.5,171.2 L901.6,157.3" fill="none" stroke="#1c1c1c" stroke-width="0.95" />
<path d="M901.6,157.3 L891.5,221.5 L872.0,159.3" fill="none" stroke="#1c1c1c" stroke-width="0.95" />
<path d="M824.3,165.2 L872.0,159.3" fill="none" stroke="#1c1c1c" stroke-width="0.95" />
<path d="M824.3,165.2 L854.7,234.0 L798.9,185.9 L744.0,242.0 L826.7,282.7" fill="none" stroke="#1c1c1c" stroke-width="0.95" />
<path d="M734.0,284.5 Q780,291 826.7,282.7" fill="none" stroke="#1c1c1c" stroke-width="0.95" />
<path d="M734.0,284.5 L689.7,362.2 L829.0,329.0" fill="none" stroke="#1c1c1c" stroke-width="0.95" />
<path d="M689.7,362.2 L701.7,426.7" fill="none" stroke="#1c1c1c" stroke-width="0.95" />
<path d="M701.7,426.7 Q776,416 847.2,372.0" fill="none" stroke="#1c1c1c" stroke-width="0.95" />
<path d="M847.2,372.0 Q777.8,410.2 726.0,470.0" fill="none" stroke="#1c1c1c" stroke-width="0.95" />
<path d="M726.0,470.0 L731.0,563.0 L877.0,406.5" fill="none" stroke="#1c1c1c" stroke-width="0.95" />
<path d="M731.0,563.0 L778.5,608.0" fill="none" stroke="#1c1c1c" stroke-width="0.95" />
<path d="M778.5,608.0 Q867.2,535.7 915.2,431.7" fill="none" stroke="#1c1c1c" stroke-width="0.95" />
<path d="M915.2,431.7 C910.8,440.2 895.5,465.8 889.0,483.0 C882.5,500.2 879.8,515.5 876.0,535.0 C872.2,554.5 869.0,581.3 866.0,600.0 C863.0,618.7 859.3,639.2 858.0,647.0" fill="none" stroke="#1c1c1c" stroke-width="0.95" />
<path d="M858.0,647.0 L911.5,725.7 L957.7,446.7 L940.2,728.7 L1006.0,730.0" fill="none" stroke="#1c1c1c" stroke-width="0.95" />
<path d="M915.2,431.7 L957.7,446.7" fill="none" stroke="#1c1c1c" stroke-width="0.95" />
<path d="M957.7,446.7 Q980,446.5 1002.7,442.2" fill="none" stroke="#1c1c1c" stroke-width="0.95" />
<path d="M1002.7,442.2 C1004.1,446.8 1008.7,459.0 1011.0,470.0 C1013.3,481.0 1015.5,493.0 1016.5,508.0 C1017.5,523.0 1017.3,542.7 1017.0,560.0 C1016.7,577.3 1015.7,592.0 1014.7,612.0 C1013.7,632.0 1012.5,660.3 1011.0,680.0 C1009.5,699.7 1006.8,721.7 1006.0,730.0" fill="none" stroke="#1c1c1c" stroke-width="1.35" />
<path d="M826.7,282.7 Q839.5,256.5 854.7,234.0" fill="none" stroke="#1c1c1c" stroke-width="0.8" />
<path d="M854.7,234.0 Q871.0,226.0 891.5,221.5" fill="none" stroke="#1c1c1c" stroke-width="0.8" />
<path d="M891.5,221.5 Q911.5,224.0 930.3,228.6" fill="none" stroke="#1c1c1c" stroke-width="0.8" />
<path d="M826.7,282.7 Q825.7,305.0 829.0,329.0" fill="none" stroke="#1c1c1c" stroke-width="0.8" />
<path d="M829.0,329.0 Q837.0,351.0 847.2,372.0" fill="none" stroke="#1c1c1c" stroke-width="0.8" />
<path d="M847.2,372.0 Q861.0,390.5 877.0,406.5" fill="none" stroke="#1c1c1c" stroke-width="0.8" />
<path d="M877.0,406.5 Q896.5,421.7 915.2,431.7" fill="none" stroke="#1c1c1c" stroke-width="0.8" />
<text x="757.7" y="173.0" font-size="25" fill="#2e5d8e">8,5см</text>
<text x="870.2" y="152.0" font-size="25" fill="#2e5d8e">7см</text>
<text x="952.7" y="186.2" font-size="25" fill="#2e5d8e">8,5см</text>
<text x="718.9" y="271.5" font-size="25" fill="#2e5d8e">8,5см</text>
<text x="713.2" y="301.0" font-size="25" fill="#2e5d8e">9</text>
<text x="670.9" y="374.0" font-size="25" fill="#2e5d8e">8</text>
<text x="831.2" y="292.7" font-size="25" fill="#2e5d8e">2'</text>
<text x="832.2" y="334.7" font-size="25" fill="#2e5d8e">1'</text>
<text x="852.7" y="376.0" font-size="25" fill="#2e5d8e">2'</text>
<text x="878.2" y="406.5" font-size="25" fill="#2e5d8e">1'</text>
<text x="913.9" y="427.5" font-size="25" fill="#2e5d8e">2'</text>
<text x="953.7" y="439.0" font-size="25" fill="#2e5d8e">1</text>
<text x="1001.2" y="438.0" font-size="25" fill="#2e5d8e">2</text>
<text x="938.2" y="299.0" font-size="25" fill="#2e5d8e">10</text>
<text x="692.7" y="448.0" font-size="25" fill="#2e5d8e">7'</text>
<text x="711.2" y="485.0" font-size="25" fill="#2e5d8e">7</text>
<text x="718.2" y="586.0" font-size="25" fill="#2e5d8e">6</text>
<text x="783.9" y="622.5" font-size="25" fill="#2e5d8e">5'</text>
<text x="842.7" y="661.5" font-size="25" fill="#2e5d8e">5</text>
<text x="900.7" y="747.7" font-size="25" fill="#2e5d8e">4'</text>
<text x="935.2" y="751.5" font-size="25" fill="#2e5d8e">4</text>
<text x="1008.2" y="741.5" font-size="25" fill="#2e5d8e">3</text>
<text transform="translate(938.5,732.0) rotate(-90)" font-size="25" fill="#2e5d8e">6см</text>
<text x="781.8" y="715.7" font-size="33" fill="#1c1c1c">в</text>
</svg>
<div id="tbwin"><div class="cap"><b id="gcap">GRAFIS</b><div class="xb"><svg width="10" height="14" viewBox="0 0 10 14"><path d="M2,4 L7,10 M7,4 L2,10" stroke="#000" stroke-width="1.1"/></svg></div></div></div>
<svg width="0" height="0" style="position:absolute"><defs>
<linearGradient id="gfold" x1="0" y1="0" x2="0" y2="1"><stop offset="0" stop-color="#f4e6a6"/><stop offset="1" stop-color="#c8a84a"/></linearGradient>
<linearGradient id="ggrn" x1="0" y1="0" x2="0" y2="1"><stop offset="0" stop-color="#a6d44a"/><stop offset="1" stop-color="#5f9418"/></linearGradient>
<linearGradient id="ggry" x1="0" y1="0" x2="1" y2="0"><stop offset="0" stop-color="#8a8a8a"/><stop offset="1" stop-color="#4a4a4a"/></linearGradient>
<linearGradient id="gblu" x1="0" y1="0" x2="1" y2="0"><stop offset="0" stop-color="#6a9ad8"/><stop offset="1" stop-color="#2c5ca8"/></linearGradient>
<radialGradient id="gglass" cx="0.4" cy="0.4" r="0.7"><stop offset="0" stop-color="#ffffff"/><stop offset="1" stop-color="#c8d4e4"/></radialGradient>
<radialGradient id="gstop" cx="0.4" cy="0.3" r="0.8"><stop offset="0" stop-color="#e8506a"/><stop offset="1" stop-color="#b80c30"/></radialGradient>
</defs></svg>
<div class="btn" style="left:605.00px;top:40px;width:37.6px;height:37.5px"><svg width="37.6" height="37.5" viewBox="0 0 38 38" font-family="Liberation Sans, sans-serif"><path d="M5.5,31.5 V18.5 L8,15 H15.5 L18,17.5 H27 V21" fill="url(#gfold)" stroke="#3a3420" stroke-width="1.1"/>
<path d="M5.5,31.5 L11.5,21 H34 L28.5,31.5 Z" fill="url(#gfold)" stroke="#3a3420" stroke-width="1.1" stroke-linejoin="round"/>
<path d="M11,7.5 C18,4.5 26,6 28,13 L32.5,11 L27,24.5 L16.5,17.5 L21.5,15.5 C20,11 15,10 11,7.5 Z" fill="url(#ggrn)" stroke="#5b8f1a" stroke-width="0.6"/></svg></div>
<div class="btn" style="left:644.05px;top:40px;width:37.6px;height:37.5px"><svg width="37.6" height="37.5" viewBox="0 0 38 38" font-family="Liberation Sans, sans-serif"><path d="M6.5,8.5 H28.5 V31 H9 L6.5,28.5 Z" fill="#8dc63f" stroke="#5d9220" stroke-width="0.8"/>
<rect x="9.5" y="9" width="16" height="11.5" fill="#fff" stroke="#333" stroke-width="1"/>
<rect x="11.5" y="23.5" width="13" height="7.5" fill="#e8e8ee" stroke="#222" stroke-width="1"/>
<rect x="12.5" y="24.5" width="3" height="5.5" fill="#223"/><rect x="21" y="24" width="2" height="6.5" fill="#334"/></svg></div>
<div class="btn" style="left:683.10px;top:40px;width:37.6px;height:37.5px"><svg width="37.6" height="37.5" viewBox="0 0 38 38" font-family="Liberation Sans, sans-serif"><rect x="12.5" y="7" width="12" height="10" fill="#fff" stroke="#444" stroke-width="0.9"/>
<rect x="4.5" y="15" width="28" height="14" rx="3.5" fill="#8e9094" stroke="#3c3c40" stroke-width="1"/>
<rect x="9.5" y="17.5" width="18" height="8.5" fill="#e3c878" stroke="#4a4020" stroke-width="0.9"/>
<path d="M10,21 q4,-1.5 9,0 t8,0" fill="none" stroke="#b89848" stroke-width="0.8"/>
<path d="M11,26 H26 L28,32 H9 Z" fill="#fff" stroke="#333" stroke-width="1"/>
<path d="M10.5,30 H26.5" stroke="#333" stroke-width="0.8"/></svg></div>
<div class="btn" style="left:722.15px;top:40px;width:37.6px;height:37.5px"><svg width="37.6" height="37.5" viewBox="0 0 38 38" font-family="Liberation Sans, sans-serif"><path d="M20,20 L30.5,30.5" stroke="#2a5ea6" stroke-width="4.2" stroke-linecap="round"/>
<path d="M20.5,19 L31,29.5" stroke="#5c8fd0" stroke-width="1.2" stroke-linecap="round"/>
<circle cx="14.5" cy="14" r="8.3" fill="url(#gglass)" stroke="#2a2a2a" stroke-width="1.4"/>
<circle cx="14.5" cy="14" r="6" fill="none" stroke="#d8dde6" stroke-width="1.2"/></svg></div>
<div class="btn" style="left:761.20px;top:40px;width:37.6px;height:37.5px"><svg width="37.6" height="37.5" viewBox="0 0 38 38" font-family="Liberation Sans, sans-serif"><g stroke="#3a6cb4" stroke-width="1.3" fill="#3a6cb4"><path d="M17,14 L9,6.5 M23,14 L30.5,6.5 M23,19 L30,25"/>
<path d="M7.5,5 l5,1 -4,4z M32,5 l-5,1 4,4z M31.5,26.5 l-1,-5 -4,4z" stroke="none"/></g>
<rect x="16.5" y="12.5" width="7.5" height="7" fill="#fff" stroke="#222" stroke-width="1"/>
<rect x="4" y="17" width="17" height="17" fill="url(#ggrn)"/>
<text x="5.2" y="31.2" font-size="13.5" font-weight="bold" fill="#222" textLength="15" lengthAdjust="spacingAndGlyphs">F6</text></svg></div>
<div class="btn" style="left:800.25px;top:40px;width:37.6px;height:37.5px"><svg width="37.6" height="37.5" viewBox="0 0 38 38" font-family="Liberation Sans, sans-serif"><rect x="5.5" y="5.5" width="26" height="27" fill="#fff" stroke="#333" stroke-width="1"/>
<rect x="5.5" y="9.5" width="22" height="23" fill="#fff" stroke="#333" stroke-width="1"/>
<rect x="5.5" y="13.5" width="18" height="19" fill="#fff" stroke="#333" stroke-width="1"/>
<path d="M7,18.5 L12,15.5 Q14,18.5 17.5,16.5 L20,17.5 V25 L19,31.5 H8 Q6.5,25 7,18.5 Z" fill="url(#ggrn)" stroke="#5b8f1a" stroke-width="0.5"/></svg></div>
<div class="btn" style="left:839.30px;top:40px;width:37.6px;height:37.5px"><svg width="37.6" height="37.5" viewBox="0 0 38 38" font-family="Liberation Sans, sans-serif"><rect x="5.5" y="14" width="28" height="12" fill="#e9d48c" stroke="#333" stroke-width="1"/><path d="M5.5,14 h6 q-2.5,6 0,12 h-6z" fill="#eee" stroke="#333" stroke-width="1"/><path d="M13.5,14.5 v11" stroke="#3a3320" stroke-width="1.3"/><path d="M16.5,14.5 v11" stroke="#3a3320" stroke-width="1.3"/><path d="M19.5,14.5 v11" stroke="#3a3320" stroke-width="1.3"/><path d="M22.5,14.5 v11" stroke="#3a3320" stroke-width="1.3"/><path d="M25.5,14.5 v11" stroke="#3a3320" stroke-width="1.3"/><path d="M28.5,14.5 v11" stroke="#3a3320" stroke-width="1.3"/><path d="M31,14.5 v11" stroke="#3a3320" stroke-width="1.3"/><path d="M12,20 h21" stroke="#e9d48c" stroke-width="2.2"/></svg></div>
<div class="btn" style="left:878.35px;top:40px;width:37.6px;height:37.5px"><svg width="37.6" height="37.5" viewBox="0 0 38 38" font-family="Liberation Sans, sans-serif"><path d="M16.5,5 H21.5 V17 H26.5 L19,28 L11.5,17 H16.5 Z" fill="url(#ggry)" stroke="#555" stroke-width="0.5"/>
<path d="M6,29.5 H33 M6,32.9 H33" stroke="#2f5fb0" stroke-width="2.2"/></svg></div>
<div class="btn" style="left:917.40px;top:40px;width:37.6px;height:37.5px"><svg width="37.6" height="37.5" viewBox="0 0 38 38" font-family="Liberation Sans, sans-serif"><path d="M13,6 H17 V16 H21 V9 H25 V16 H28.5 L22.5,24.5 L19.5,20 L15,24.5 L8,16 H13 Z" fill="url(#ggrn)" stroke="#4d7a10" stroke-width="0.7"/>
<path d="M17,7 v9 M21,10 v6" stroke="#35580a" stroke-width="1"/>
<path d="M6,28.9 H33 M6,32.5 H33" stroke="#3c3c3c" stroke-width="2.2"/></svg></div>
<div class="btn" style="left:956.45px;top:40px;width:37.6px;height:37.5px"><svg width="37.6" height="37.5" viewBox="0 0 38 38" font-family="Liberation Sans, sans-serif"><rect x="10.5" y="5.5" width="22" height="19" fill="#fff" stroke="#333" stroke-width="0.8"/><rect x="10.9" y="5.9" width="21.2" height="3" fill="#e8cf7a"/><path d="M10.5,9.3 h22" stroke="#444" stroke-width="0.7"/><path d="M10.5,13.1 h22" stroke="#444" stroke-width="0.7"/><path d="M10.5,16.9 h22" stroke="#444" stroke-width="0.7"/><path d="M10.5,20.7 h22" stroke="#444" stroke-width="0.7"/><path d="M21.5,5.5 v19" stroke="#444" stroke-width="0.7"/><text x="2.5" y="32.5" font-size="26" font-weight="bold" fill="#4e4e4e" stroke="#3a3a3a" stroke-width="0.5">G</text></svg></div>
<div class="btn" style="left:995.50px;top:40px;width:37.6px;height:37.5px"><svg width="37.6" height="37.5" viewBox="0 0 38 38" font-family="Liberation Sans, sans-serif"><rect x="10.5" y="5.5" width="22" height="19" fill="#fff" stroke="#333" stroke-width="0.8"/><rect x="10.9" y="5.9" width="21.2" height="3" fill="#e8cf7a"/><path d="M10.5,9.3 h22" stroke="#444" stroke-width="0.7"/><path d="M10.5,13.1 h22" stroke="#444" stroke-width="0.7"/><path d="M10.5,16.9 h22" stroke="#444" stroke-width="0.7"/><path d="M10.5,20.7 h22" stroke="#444" stroke-width="0.7"/><path d="M21.5,5.5 v19" stroke="#444" stroke-width="0.7"/><text x="3.5" y="32.5" font-size="26" font-weight="bold" fill="#666" stroke="#505050" stroke-width="0.5">X</text></svg></div>
<div class="btn" style="left:1034.55px;top:40px;width:37.6px;height:37.5px"><svg width="37.6" height="37.5" viewBox="0 0 38 38" font-family="Liberation Sans, sans-serif"><rect x="9.5" y="5.5" width="22" height="17" fill="#fff" stroke="#333" stroke-width="0.8"/><rect x="9.9" y="5.9" width="21.2" height="3" fill="#e8cf7a"/><path d="M9.5,8.9 h22" stroke="#444" stroke-width="0.7"/><path d="M9.5,12.3 h22" stroke="#444" stroke-width="0.7"/><path d="M9.5,15.7 h22" stroke="#444" stroke-width="0.7"/><path d="M9.5,19.1 h22" stroke="#444" stroke-width="0.7"/><path d="M20.5,5.5 v17" stroke="#444" stroke-width="0.7"/><text x="22" y="30.5" font-size="19" font-weight="bold" font-style="italic" fill="#555">Z</text>
<rect x="4" y="16" width="18.5" height="18" fill="url(#ggrn)"/>
<text x="6" y="30" font-size="13" font-weight="bold" fill="#222" textLength="16" lengthAdjust="spacingAndGlyphs">F11</text></svg></div>
<div class="btn" style="left:1073.60px;top:40px;width:37.6px;height:37.5px"><svg width="37.6" height="37.5" viewBox="0 0 38 38" font-family="Liberation Sans, sans-serif"><rect x="9.5" y="5.5" width="11" height="11" fill="#fff" stroke="#333" stroke-width="0.8"/><rect x="9.9" y="5.9" width="10.2" height="3" fill="#fff"/><path d="M9.5,9.2 h11" stroke="#444" stroke-width="0.7"/><path d="M9.5,12.8 h11" stroke="#444" stroke-width="0.7"/><path d="M15.0,5.5 v11" stroke="#444" stroke-width="0.7"/><path d="M22,10 L24.5,6 Q26.5,8.5 28.5,6.5 L30,10 Q30.5,13 32.5,15 V25.5 H22 Z" fill="url(#gblu)" stroke="#2a55a0" stroke-width="0.5"/>
<rect x="4" y="16" width="18.5" height="18" fill="url(#ggrn)"/>
<text x="6" y="30" font-size="13" font-weight="bold" fill="#222" textLength="16" lengthAdjust="spacingAndGlyphs">F12</text></svg></div>
<div class="btn" style="left:1112.65px;top:40px;width:37.6px;height:37.5px"><svg width="37.6" height="37.5" viewBox="0 0 38 38" font-family="Liberation Sans, sans-serif"><path d="M14.5,6 H23 L29,12 V18.5 L23,24.5 H14.5 L8.5,18.5 V12 Z" fill="url(#gstop)" stroke="#a00828" stroke-width="0.6"/>
<text x="9.6" y="18.6" font-size="9" font-weight="bold" fill="#fff" textLength="18.5" lengthAdjust="spacingAndGlyphs">STOP</text>
<path d="M6.5,28.6 H32.5 M6.5,32 H32.5" stroke="#3c3c3c" stroke-width="2.2"/></svg></div>


</div></body></html>
